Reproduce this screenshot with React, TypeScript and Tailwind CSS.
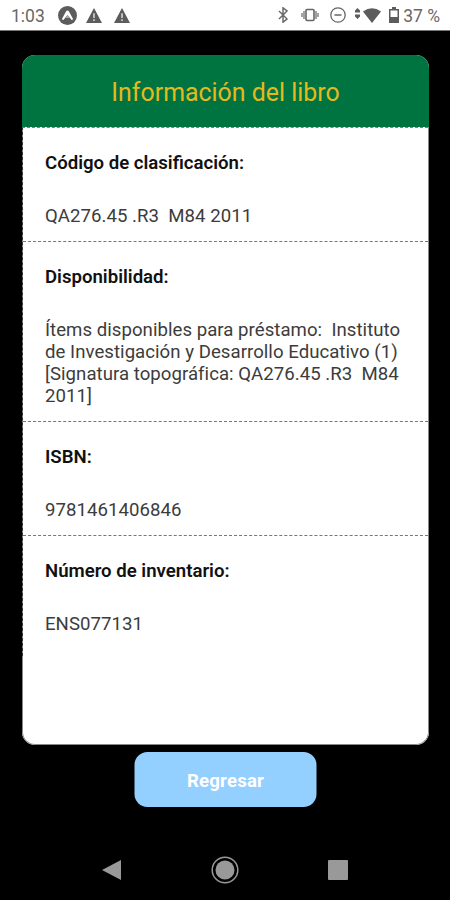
import type { ReactNode } from "react";

type Field = {
    label: string;
    value: string;
};

const fields: Field[] = [
    { label: "Código de clasificación:", value: "QA276.45 .R3  M84 2011" },
    {
        label: "Disponibilidad:",
        value: "Ítems disponibles para préstamo:  Instituto de Investigación y Desarrollo Educativo (1) [Signatura topográfica: QA276.45 .R3  M84 2011]",
    },
    { label: "ISBN:", value: "9781461406846" },
    { label: "Número de inventario:", value: "ENS077131" },
];

type IconProps = {
    className: string;
    viewBox: string;
    children: ReactNode;
};

function Icon({ className, viewBox, children }: IconProps) {
    return (
        <svg className={className} viewBox={viewBox} fill="none" aria-hidden="true">
            {children}
        </svg>
    );
}

function WarningIcon({ className }: { className: string }) {
    return (
        <Icon className={className} viewBox="0 0 16 15">
            <path d="M8 0 16 15H0Z" fill="#5c5c5c" />
            <path d="M8 5.2V10M8 11.3v1.6" stroke="#ddd" strokeWidth="1.5" />
        </Icon>
    );
}

function StatusBar() {
    return (
        <header className="flex h-[31px] shrink-0 items-center border-b border-[#777] bg-white pl-[11px] pr-[10px] text-[17.5px] text-[#686868]">
            <span className="w-[47px] pt-[2px]">1:03</span>
            <Icon className="h-[19px] w-[19px]" viewBox="0 0 19 19">
                <circle cx="9.5" cy="9.5" r="9.5" fill="#5c5c5c" />
                <path
                    d="M3.8 13.2 8 5.5q1.5-2 3 0l4.2 7.7-1.6.8-4.1-5-4.1 5Z"
                    fill="#fff"
                />
                <path d="m9.5 9 2 3h-4Z" fill="#aaa" />
            </Icon>
            <WarningIcon className="ml-[9px] h-[15px] w-4" />
            <WarningIcon className="ml-[12px] h-[15px] w-4" />

            <Icon className="ml-auto h-[16px] w-[10px]" viewBox="0 0 10 16">
                <path d="m1 4 8 8-4 3.2V.8L9 4l-8 8" stroke="#6b6b6b" strokeWidth="1.5" />
            </Icon>
            <Icon className="ml-[13px] h-[14px] w-[18px]" viewBox="0 0 18 14">
                <rect x="5" y="1.5" width="8" height="11" rx="1" stroke="#666" strokeWidth="1.6" />
                <path d="M3 3v8M15 3v8M1 5v4M17 5v4" stroke="#999" strokeWidth="1.8" />
            </Icon>
            <Icon className="ml-[11px] h-[16px] w-[16px]" viewBox="0 0 16 16">
                <circle cx="8" cy="8" r="7.2" stroke="#666" strokeWidth="1.3" />
                <path d="M4.5 8h7" stroke="#666" strokeWidth="1.5" />
            </Icon>
            <Icon className="ml-[9px] mb-[3px] h-[11px] w-[5px]" viewBox="0 0 5 11">
                <path d="M2.5 0 5 2.5v2H0v-2ZM0 6.5h5v2L2.5 11 0 8.5Z" fill="#5c5c5c" />
            </Icon>
            <Icon className="ml-[3px] h-[15px] w-[18px]" viewBox="0 0 18 15">
                <path d="M0 3.5Q9-3.2 18 3.5L9 15Z" fill="#5c5c5c" />
            </Icon>
            <Icon className="ml-[8px] h-[16px] w-[10px]" viewBox="0 0 10 16">
                <path d="M3 0h4v2h3v14H0V2h3Z" fill="#5c5c5c" />
                <path d="M1.5 3.5h7v6.5h-7Z" fill="#fff" />
            </Icon>
            <span className="ml-[4px] pt-[2px] whitespace-nowrap">37 %</span>
        </header>
    );
}

function FieldRow({ label, value }: Field) {
    return (
        <section className="border-b border-dashed border-[#777] px-[22px] pt-[24px] pb-[14px] text-[18.6px] leading-[22px] last:border-b-0">
            <h2 className="font-semibold text-[#111]">{label}</h2>
            <p className="mt-[31px] whitespace-pre-wrap tracking-[0.04px] text-[#3c3c3c]">{value}</p>
        </section>
    );
}

function NavigationBar() {
    return (
        <nav className="mt-auto mb-[16px] flex items-center pl-[102px]">
            <Icon className="h-[22px] w-[20px]" viewBox="0 0 20 22">
                <path d="M0 11 19 1v20Z" fill="#999" />
            </Icon>
            <Icon className="ml-[89px] h-[28px] w-[28px]" viewBox="0 0 28 28">
                <circle cx="14" cy="14" r="12.8" stroke="#999" strokeWidth="1.5" />
                <circle cx="14" cy="14" r="9.5" fill="#999" />
            </Icon>
            <span className="ml-[89px] size-[20px] rounded-[1px] bg-[#999]" />
        </nav>
    );
}

export default function App() {
    return (
        <div className="flex h-[900px] w-[450px] flex-col overflow-hidden bg-black font-[Roboto,sans-serif]">
            <StatusBar />
            <main className="mt-[24px] ml-[22px] flex h-[690px] w-[407px] shrink-0 flex-col overflow-hidden rounded-[13px] bg-white">
                <h1 className="flex h-[72px] shrink-0 items-center justify-center bg-[#007440] pt-[4px] text-[24.9px] text-[#e5b91e]">
                    Información del libro
                </h1>
                <div className="flex-1 rounded-b-[13px] border-x border-b border-[#888]">
                    <div className="-ml-px h-[529px] border-t border-l border-dashed border-t-[#5b9a4c] border-l-[#333]">
                        {fields.map((field) => (
                            <FieldRow key={field.label} {...field} />
                        ))}
                    </div>
                </div>
            </main>
            <button className="mx-auto mt-[7px] h-[55px] w-[182px] shrink-0 translate-x-[0.5px] rounded-[13px] bg-[#94d0ff] pt-[4px] text-[18.6px] font-bold tracking-[0.2px] text-white">
                Regresar
            </button>
            <NavigationBar />
        </div>
    );
}
